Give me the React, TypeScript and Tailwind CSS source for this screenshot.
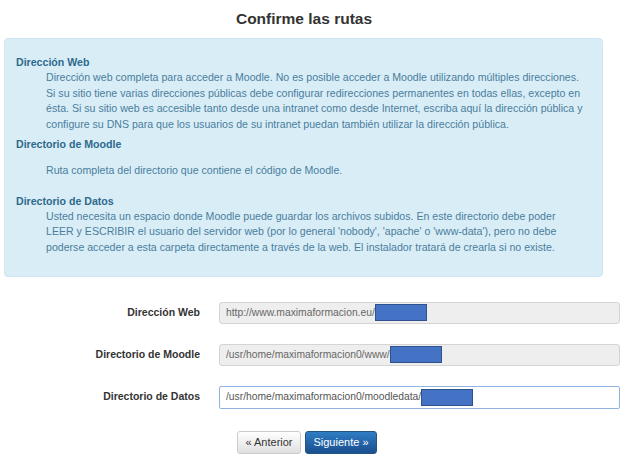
export default function App() {
  const rows = [
    { label: "Dirección Web", value: "http://www.maximaformacion.eu/", readOnly: true },
    { label: "Directorio de Moodle", value: "/usr/home/maximaformacion0/www/", readOnly: true },
    { label: "Directorio de Datos", value: "/usr/home/maximaformacion0/moodledata/", readOnly: false },
  ];

  return (
    <div className="w-[630px] h-[460px] bg-white font-['Liberation_Sans',Arial,sans-serif] overflow-hidden">
      {/* Heading */}
      <h2 className="w-[608px] pt-[7px] h-[38px] text-center text-[15.5px] font-bold text-[#333]">
        Confirme las rutas
      </h2>

      {/* Info box */}
      <div className="ml-[4px] w-[599px] bg-[#d9edf7] border border-[#cfe6f2] rounded-[4px] pt-[15px] pb-[20px] pl-[11px] pr-[10px] text-[10.6px] leading-[15.7px] text-[#4a7d9c] whitespace-nowrap">
        <dl>
          <dt className="font-bold text-[#2d6a8c] leading-[16px]">Dirección Web</dt>
          <dd className="ml-[30px]">
            Dirección web completa para acceder a Moodle. No es posible acceder a Moodle utilizando múltiples direcciones.
            <br />
            Si su sitio tiene varias direcciones públicas debe configurar redirecciones permanentes en todas ellas, excepto en
            <br />
            ésta. Si su sitio web es accesible tanto desde una intranet como desde Internet, escriba aquí la dirección pública y
            <br />
            configure su DNS para que los usuarios de su intranet puedan también utilizar la dirección pública.
          </dd>
          <dt className="mt-[3px] font-bold text-[#2d6a8c] leading-[16px]">Directorio de Moodle</dt>
          <dd className="ml-[30px] mt-[11px]">Ruta completa del directorio que contiene el código de Moodle.</dd>
          <dt className="mt-[14px] font-bold text-[#2d6a8c] leading-[16px]">Directorio de Datos</dt>
          <dd className="ml-[30px]">
            Usted necesita un espacio donde Moodle puede guardar los archivos subidos. En este directorio debe poder
            <br />
            LEER y ESCRIBIR el usuario del servidor web (por lo general 'nobody', 'apache' o 'www-data'), pero no debe
            <br />
            poderse acceder a esta carpeta directamente a través de la web. El instalador tratará de crearla si no existe.
          </dd>
        </dl>
      </div>

      {/* Form */}
      <div className="mt-[25px] flex flex-col gap-[20px]">
        {rows.map((r) => (
          <div key={r.label} className="flex items-center">
            <label className="w-[200px] text-right text-[10.5px] font-bold text-[#333]">{r.label}</label>
            <div
              className={
                r.readOnly
                  ? "ml-[19px] w-[401px] h-[22px] flex items-center px-[6px] rounded-[3px] border border-[#d4d4d4] bg-[#eeeeee] text-[10.3px] text-[#666]"
                  : "ml-[19px] w-[401px] h-[23px] flex items-center px-[6px] rounded-[2px] border border-[#8fb3e3] bg-white text-[10.3px] text-[#555]"
              }
            >
              <span className="whitespace-nowrap">{r.value}</span>
              <span className="inline-block w-[52px] h-[17px] bg-[#4472c4] border border-[#2f528f]" />
            </div>
          </div>
        ))}
      </div>

      {/* Buttons */}
      <div className="mt-[22px] ml-[237px] flex gap-[4px]">
        <button className="w-[64px] h-[23px] rounded-[3px] border border-[#cccccc] bg-gradient-to-b from-white to-[#e0e0e0] text-[11px] text-[#333]">
          « Anterior
        </button>
        <button className="w-[72px] h-[23px] rounded-[3px] border border-[#245580] bg-gradient-to-b from-[#2f7dc4] to-[#1a4f8f] text-[11px] text-white">
          Siguiente »
        </button>
      </div>
    </div>
  );
}
